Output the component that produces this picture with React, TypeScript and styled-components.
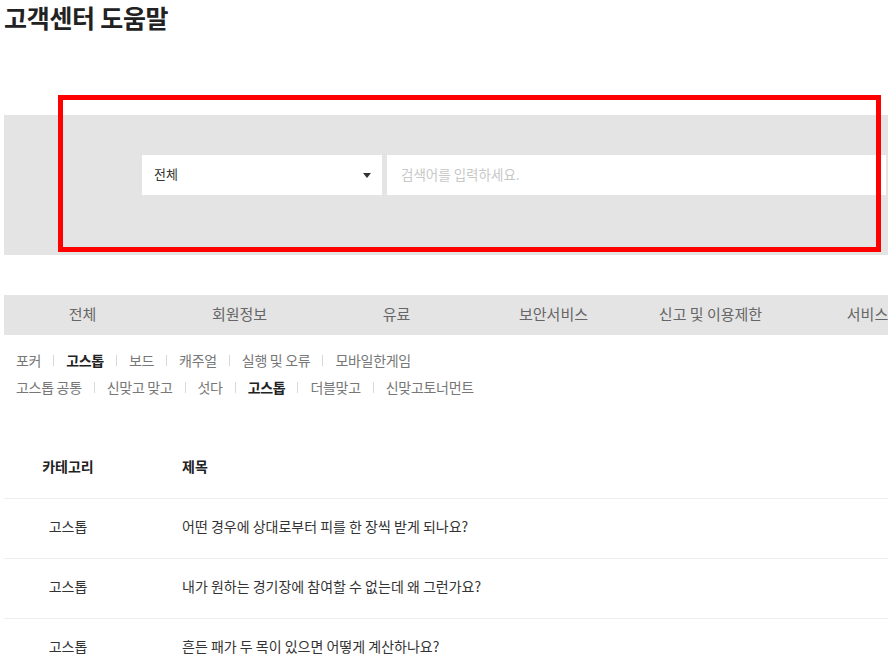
import React from "react";
import styled, { createGlobalStyle } from "styled-components";

const Global = createGlobalStyle`
  html, body { margin: 0; padding: 0; background: #fff; overflow: hidden; }
  body { font-family: "Noto Sans CJK KR", "Noto Sans", sans-serif; }
  * { box-sizing: border-box; }
`;

const Page = styled.div`
  position: relative;
  width: 1100px;
  padding-left: 4px;
`;

const Title = styled.h1`
  margin: 0;
  font-size: 25px;
  line-height: 34px;
  font-weight: 700;
  color: #222;
  letter-spacing: -0.3px;
`;

const SearchBand = styled.div`
  margin-top: 81px;
  height: 140px;
  background: #e4e4e4;
  display: flex;
  align-items: flex-start;
  padding: 40px 0 0 138px;
  gap: 5px;
`;

const SelectBox = styled.div`
  width: 240px;
  height: 40px;
  background: #fff;
  display: flex;
  align-items: center;
  justify-content: space-between;
  padding: 0 11px 3px 12px;
  font-size: 13px;
  color: #333;
`;

const Caret = styled.span`
  width: 0;
  height: 0;
  margin-top: 3px;
  border-left: 4.5px solid transparent;
  border-right: 4.5px solid transparent;
  border-top: 5px solid #333;
`;

const SearchInput = styled.input`
  width: 499px;
  height: 40px;
  border: none;
  outline: none;
  padding: 0 14px 3px;
  font-family: inherit;
  font-size: 13.5px;
  color: #333;
  &::placeholder { color: #c8c8c8; }
`;

const Tabs = styled.div`
  margin-top: 40px;
  height: 40px;
  background: #e4e4e4;
  display: flex;
`;

const Tab = styled.div`
  flex: 0 0 157px;
  display: flex;
  align-items: center;
  justify-content: center;
  padding-bottom: 3px;
  font-size: 15px;
  color: #666;
  white-space: nowrap;
`;

const SubRows = styled.div`
  padding: 11px 0 0 12px;
`;

const SubRow = styled.div`
  display: flex;
  align-items: center;
  height: 27px;
`;

const SubItem = styled.span<{ $active?: boolean }>`
  display: inline-flex;
  align-items: center;
  font-size: 14px;
  letter-spacing: -0.3px;
  color: ${(p) => (p.$active ? "#222" : "#777")};
  font-weight: ${(p) => (p.$active ? 700 : 400)};
  white-space: nowrap;
  &:not(:first-child)::before {
    content: "";
    display: inline-block;
    width: 1px;
    height: 11px;
    background: #d8d8d8;
    margin: 1px 12px 0;
  }
`;

const Table = styled.div`
  margin-top: 39px;
`;

const Row = styled.div<{ $head?: boolean }>`
  display: grid;
  grid-template-columns: 128px 1fr;
  height: 60px;
  padding-bottom: 5px;
  align-items: center;
  border-bottom: 1px solid #eee;
  font-size: 14px;
  color: ${(p) => (p.$head ? "#222" : "#333")};
  font-weight: ${(p) => (p.$head ? 700 : 400)};
`;

const CatCell = styled.div`
  text-align: center;
`;

const TitleCell = styled.div`
  padding-left: 50px;
  white-space: nowrap;
`;

const Highlight = styled.div`
  position: absolute;
  left: 58px;
  top: 95px;
  width: 823px;
  height: 157px;
  border: 5px solid #ff0000;
  pointer-events: none;
`;

const tabs = ["전체", "회원정보", "유료", "보안서비스", "신고 및 이용제한", "서비스", "기타"];
const sub1 = [
  { t: "포커" },
  { t: "고스톱", a: true },
  { t: "보드" },
  { t: "캐주얼" },
  { t: "실행 및 오류" },
  { t: "모바일한게임" },
];
const sub2 = [
  { t: "고스톱 공통" },
  { t: "신맞고 맞고" },
  { t: "섯다" },
  { t: "고스톱", a: true },
  { t: "더블맞고" },
  { t: "신맞고토너먼트" },
];
const rows = [
  "어떤 경우에 상대로부터 피를 한 장씩 받게 되나요?",
  "내가 원하는 경기장에 참여할 수 없는데 왜 그런가요?",
  "흔든 패가 두 목이 있으면 어떻게 계산하나요?",
  "고스톱 게임 중 연결이 끊어지면 어떻게 되나요?",
];

export default function App() {
  return (
    <>
      <Global />
      <Page>
        <Title>고객센터 도움말</Title>
        <SearchBand>
          <SelectBox>
            <span>전체</span>
            <Caret />
          </SelectBox>
          <SearchInput placeholder="검색어를 입력하세요." />
        </SearchBand>
        <Tabs>
          {tabs.map((t) => (
            <Tab key={t}>{t}</Tab>
          ))}
        </Tabs>
        <SubRows>
          <SubRow>
            {sub1.map((s) => (
              <SubItem key={s.t} $active={s.a}>{s.t}</SubItem>
            ))}
          </SubRow>
          <SubRow>
            {sub2.map((s, i) => (
              <SubItem key={i} $active={s.a}>{s.t}</SubItem>
            ))}
          </SubRow>
        </SubRows>
        <Table>
          <Row $head>
            <CatCell>카테고리</CatCell>
            <TitleCell>제목</TitleCell>
          </Row>
          {rows.map((r) => (
            <Row key={r}>
              <CatCell>고스톱</CatCell>
              <TitleCell>{r}</TitleCell>
            </Row>
          ))}
        </Table>
        <Highlight />
      </Page>
    </>
  );
}
